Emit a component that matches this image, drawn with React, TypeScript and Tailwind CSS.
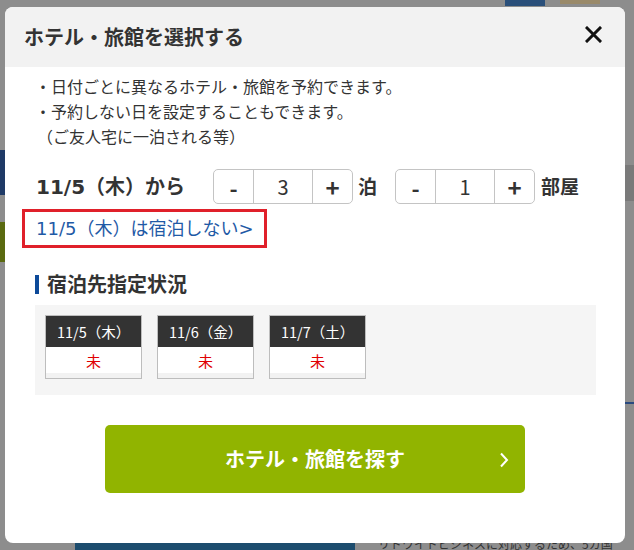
import { useState } from "react";

const font = "font-['Meiryo','Noto_Sans_CJK_JP',sans-serif]";
// Meiryo's Latin glyphs are Verdana-like, DejaVu Sans is the closest installed match
const latin = "font-['DejaVu_Sans','Noto_Sans_CJK_JP',sans-serif]";

const dates = [
  { label: "11/5（木）", status: "未" },
  { label: "11/6（金）", status: "未" },
  { label: "11/7（土）", status: "未" },
];

function Stepper({ value, onChange }: { value: number; onChange: (v: number) => void }) {
  return (
    <div className="flex h-[35px] w-[140px] rounded-[5px] border border-[#c4c4c4] bg-white text-[#333]">
      <button
        className="flex w-[40px] items-center justify-center border-r border-[#c4c4c4] text-[22px] font-bold leading-none"
        onClick={() => onChange(Math.max(1, value - 1))}
      >
        -
      </button>
      <div className="flex flex-1 items-center justify-center border-r border-[#c4c4c4] text-[20px]">
        {value}
      </div>
      <button
        className="flex w-[39px] items-center justify-center text-[24px] font-bold leading-none"
        onClick={() => onChange(value + 1)}
      >
        +
      </button>
    </div>
  );
}

export default function App() {
  const [nights, setNights] = useState(3);
  const [rooms, setRooms] = useState(1);

  return (
    <div className={`relative h-[550px] w-[634px] overflow-hidden bg-[#8d8d8d] ${font}`}>
      {/* dimmed page behind the dialog */}
      <div className="absolute left-[505px] top-0 h-[6px] w-[40px] bg-[#2a4f7a]" />
      <div className="absolute left-[560px] top-0 h-[4px] w-[40px] bg-[#9a8a6a]" />
      <div className="absolute left-0 top-[150px] h-[45px] w-[6px] bg-[#1f3a66]" />
      <div className="absolute left-0 top-[222px] h-[40px] w-[6px] bg-[#5a6a10]" />
      <div className="absolute left-[625px] top-[165px] h-[36px] w-[9px] bg-[#7a7a7a]" />
      <div className="absolute left-[625px] top-[402px] h-[2px] w-[9px] bg-[#2a4a80]" />
      <div className="absolute left-[75px] top-[543px] h-[7px] w-[280px] bg-[#1d4d6e]" />
      <div className="absolute left-[378px] top-[538px] text-[12px] leading-[12px] text-[#333]">
        リドワイドビジネスに対応するため、5カ国
      </div>

      {/* dialog */}
      <div className="absolute left-[5px] top-[7px] flex h-[536px] w-[620px] flex-col overflow-hidden rounded-[8px] bg-white">
        <div className="flex h-[60px] shrink-0 items-center justify-between bg-[#f2f2f2] pl-[19px] pr-[23px]">
          <h1 className="text-[20px] font-bold text-[#333]">ホテル・旅館を選択する</h1>
          <svg width="17" height="17" viewBox="0 0 17 17" className="-mt-[6px]">
            <path d="M2 2 L15 15 M15 2 L2 15" stroke="#111" strokeWidth="3" strokeLinecap="square" />
          </svg>
        </div>

        <div className="flex flex-col px-[30px] pt-[7px]">
          <ul className="text-[16px] leading-[25px] text-[#333]">
            <li>・日付ごとに異なるホテル・旅館を予約できます。</li>
            <li>・予約しない日を設定することもできます。</li>
            <li className="pl-[2px]">（ご友人宅に一泊される等）</li>
          </ul>

          <div className="mt-[20px] flex items-center text-[#333]">
            <span className={`w-[178px] pl-[1px] text-[20px] font-bold ${latin}`}>11/5（木）から</span>
            <Stepper value={nights} onChange={setNights} />
            <span className="ml-[5px] w-[37px] text-[19px] font-bold">泊</span>
            <Stepper value={rooms} onChange={setRooms} />
            <span className="ml-[6px] text-[19px] font-bold">部屋</span>
          </div>

          <div className="-ml-[13px] mt-[5px] w-[245px] border-[3px] border-[#e0202a] py-[3px] pl-[11px]">
            <a className={`text-[18px] leading-[27px] text-[#1f5aa6] ${latin}`}>11/5（木）は宿泊しない&gt;</a>
          </div>

          <h2 className="mt-[22px] flex items-center text-[20px] font-bold leading-[28px] text-[#333]">
            <span className="mr-[8px] h-[19px] w-[4px] bg-[#0d4a99]" />
            宿泊先指定状況
          </h2>

          <div className="mt-[7px] flex h-[90px] w-[561px] gap-[15px] bg-[#f5f5f5] pl-[10px] pt-[10px]">
            {dates.map((d) => (
              <div key={d.label} className="flex h-[64px] w-[97px] flex-col border border-[#bdbdbd] bg-white">
                <div className="flex h-[31px] items-center bg-[#333] pl-[11px] text-[14.5px] text-white">
                  {d.label}
                </div>
                <div className="flex flex-1 items-center justify-center border-b-[5px] border-[#f2f2f2] pt-[2px] text-[15px] text-[#e00000]">
                  {d.status}
                </div>
              </div>
            ))}
          </div>

          <button className="relative mx-auto mt-[30px] flex h-[68px] w-[420px] items-center justify-center rounded-[5px] bg-[#91b400] text-[20px] font-bold text-white">
            ホテル・旅館を探す
            <svg width="10" height="16" viewBox="0 0 10 16" className="absolute right-[16px] top-[27px]">
              <path d="M2 1.5 L8 8 L2 14.5" fill="none" stroke="#fff" strokeWidth="2" />
            </svg>
          </button>
        </div>
      </div>
    </div>
  );
}
